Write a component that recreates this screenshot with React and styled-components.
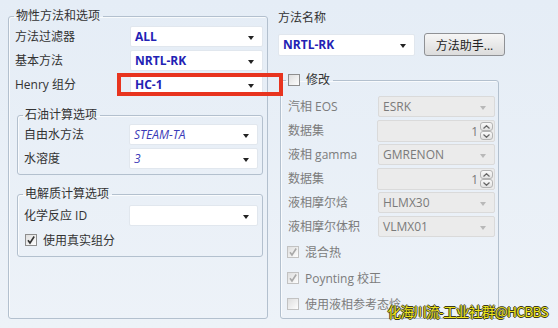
import React from "react";
import styled, { createGlobalStyle, css } from "styled-components";

const GlobalStyle = createGlobalStyle`
  html, body {
    margin: 0;
    padding: 0;
  }
  body {
    font-family: "Open Sans", "Noto Sans CJK SC", sans-serif;
    font-size: 12px;
    color: #333;
  }
`;

const Page = styled.div`
  position: relative;
  width: 558px;
  height: 328px;
  box-sizing: border-box;
  overflow: hidden;
  display: flex;
  gap: 10px;
  padding: 8px 0 9px 8px;
  background: linear-gradient(180deg, #e5edf6 0%, #edf2f8 100%);
`;

const Column = styled.div`
  display: flex;
  flex-direction: column;
  width: ${({ $width }) => $width}px;
`;

const Group = styled.fieldset`
  margin: ${({ $mt }) => $mt || 0}px 0 0 ${({ $ml }) => $ml || 0}px;
  padding: ${({ $pt }) => $pt || 0}px ${({ $pr }) => $pr ?? 5}px
    ${({ $pb }) => $pb || 0}px ${({ $pl }) => $pl ?? 5}px;
  border: 1px solid #b3c0ce;
  border-radius: 3px;
  box-shadow: inset 1px 1px 0 rgba(255, 255, 255, 0.7);
  min-width: 0;
  display: flex;
  flex-direction: column;
  ${({ $grow }) => $grow && css`flex: 1;`}
  ${({ $width }) => $width && css`width: ${$width}px; box-sizing: border-box;`}
`;

const Legend = styled.legend`
  padding: 0 3px 0 2px;
  line-height: 16px;
  font-size: 12px;
  color: #333;
  display: flex;
  align-items: center;
  gap: 6px;
`;

const Rows = styled.div`
  display: flex;
  flex-direction: column;
  gap: 3px;
`;

const Row = styled.div`
  display: grid;
  grid-template-columns: ${({ $label }) => $label}px ${({ $field }) => $field}px;
  align-items: center;
  height: ${({ $h }) => $h || 21}px;
  padding-left: ${({ $pl }) => $pl || 0}px;
`;

const Label = styled.span`
  font-size: 12px;
  line-height: 16px;
  color: ${({ $disabled }) => ($disabled ? "#7c7c7c" : "#333")};
  white-space: nowrap;
`;

const Select = styled.div`
  position: relative;
  box-sizing: border-box;
  height: ${({ $h }) => $h || 21}px;
  display: flex;
  align-items: center;
  padding: 0 20px 0 4px;
  background: ${({ $disabled }) => ($disabled ? "#ebebeb" : "#fff")};
  border: 1px solid ${({ $disabled }) => ($disabled ? "#dadada" : "#e1e7ee")};
  border-radius: 2px;
  font-size: 12px;
  color: ${({ $disabled }) => ($disabled ? "#7a7a7a" : "#2222b4")};
  font-weight: ${({ $bold }) => ($bold ? 700 : 400)};
  font-style: ${({ $italic }) => ($italic ? "italic" : "normal")};
  ${({ $italic }) => $italic && css`color: #3a3ab8;`}
  ${({ $width }) => $width && css`width: ${$width}px;`}

  &::after {
    content: "";
    position: absolute;
    right: 8px;
    top: 50%;
    margin-top: -1px;
    border-left: 3px solid transparent;
    border-right: 3px solid transparent;
    border-top: 4px solid ${({ $disabled }) => ($disabled ? "#b8b8b8" : "#222")};
  }
`;

const Highlight = styled.div`
  position: absolute;
  left: -14px;
  right: -21px;
  top: -2px;
  bottom: -2px;
  border: 4px solid #e8341f;
  pointer-events: none;
`;

const Spinner = styled.div`
  box-sizing: border-box;
  height: 22px;
  display: flex;
  align-items: center;
  justify-content: flex-end;
  gap: 2px;
  padding-right: 1px;
  background: #ebebeb;
  border: 1px solid #dadada;
  border-radius: 2px;
  color: #7a7a7a;
  font-size: 12px;
`;

const SpinButtons = styled.div`
  display: flex;
  flex-direction: column;
`;

const SpinButton = styled.div`
  width: 13px;
  height: 9px;
  box-sizing: border-box;
  border: 1px solid #b4b4b4;
  border-radius: 3px;
  background: linear-gradient(#fafafa, #e2e2e2);
  display: flex;
  align-items: center;
  justify-content: center;
`;

const CheckRow = styled.div`
  display: flex;
  align-items: center;
  gap: 6px;
  height: 16px;
  margin-top: ${({ $mt }) => $mt || 0}px;
  padding-left: ${({ $pl }) => $pl || 0}px;
  font-size: 12px;
  color: ${({ $disabled }) => ($disabled ? "#7c7c7c" : "#333")};
`;

const Box = styled.span`
  width: 12px;
  height: 12px;
  box-sizing: border-box;
  border: 1px solid ${({ $disabled }) => ($disabled ? "#c2c2c2" : "#8e8e8e")};
  background: linear-gradient(135deg, #dedede, #fdfdfd);
  display: inline-flex;
  align-items: center;
  justify-content: center;
`;

const Title = styled.div`
  margin-top: 2px;
  line-height: 16px;
  font-size: 12px;
  color: #333;
`;

const NameRow = styled.div`
  display: flex;
  align-items: center;
  gap: 9px;
  margin-top: 7px;
`;

const Button = styled.div`
  box-sizing: border-box;
  width: 81px;
  height: 23px;
  display: flex;
  align-items: center;
  justify-content: center;
  border: 1px solid #8f9195;
  border-radius: 3px;
  background: linear-gradient(#f6f6f6, #dcdcdc);
  font-size: 12px;
  color: #222;
`;

const CheckList = styled.div`
  display: flex;
  flex-direction: column;
  gap: 10px;
  margin-top: 7px;
`;

const Watermark = styled.div`
  position: absolute;
  right: 10px;
  bottom: 9px;
  font-family: "Noto Sans CJK SC", sans-serif;
  font-size: 13.5px;
  line-height: 16px;
  color: #efe41a;
  text-shadow: -1px 0 #3a3a20, 1px 0 #3a3a20, 0 1px #3a3a20, 0 -1px #3a3a20;
  letter-spacing: -0.6px;
`;

const Check = ({ checked, disabled }) => (
  <Box $disabled={disabled}>
    {checked && (
      <svg width="10" height="10" viewBox="0 0 10 10">
        <path
          d="M2 5.2 L4 8 L8.2 1.5"
          fill="none"
          stroke={disabled ? "#a9a9a9" : "#333"}
          strokeWidth="1.6"
        />
      </svg>
    )}
  </Box>
);

const Spin = ({ value }) => (
  <Spinner>
    {value}
    <SpinButtons>
      <SpinButton>
        <svg width="7" height="4" viewBox="0 0 7 4">
          <path d="M0.5 3.5 L3.5 0.7 L6.5 3.5" fill="none" stroke="#666" strokeWidth="1.2" />
        </svg>
      </SpinButton>
      <SpinButton>
        <svg width="7" height="4" viewBox="0 0 7 4">
          <path d="M0.5 0.5 L3.5 3.3 L6.5 0.5" fill="none" stroke="#666" strokeWidth="1.2" />
        </svg>
      </SpinButton>
    </SpinButtons>
  </Spinner>
);

const App = () => {
  return (
    <Page>
      <GlobalStyle />
      <Column $width={260}>
        <Group $grow $pt={2} $pl={5} $pr={4}>
          <Legend>物性方法和选项</Legend>
          <Rows>
            <Row $label={115} $field={133} $pl={1}>
              <Label>方法过滤器</Label>
              <Select $bold>ALL</Select>
            </Row>
            <Row $label={115} $field={133} $pl={1}>
              <Label>基本方法</Label>
              <Select $bold>NRTL-RK</Select>
            </Row>
            <Row $label={115} $field={133} $pl={1}>
              <Label>Henry 组分</Label>
              <Select $bold>
                HC-1
                <Highlight />
              </Select>
            </Row>
          </Rows>

          <Group $mt={12} $ml={3} $width={246} $pt={1} $pb={5}>
            <Legend>石油计算选项</Legend>
            <Rows>
              <Row $label={105} $field={129} $pl={1}>
                <Label>自由水方法</Label>
                <Select $italic>STEAM-TA</Select>
              </Row>
              <Row $label={105} $field={129} $pl={1}>
                <Label>水溶度</Label>
                <Select $italic>3</Select>
              </Row>
            </Rows>
          </Group>

          <Group $mt={11} $ml={3} $width={246} $pt={3} $pb={8}>
            <Legend>电解质计算选项</Legend>
            <Row $label={105} $field={129} $pl={1}>
              <Label>化学反应 ID</Label>
              <Select />
            </Row>
            <CheckRow $mt={6} $pl={2}>
              <Check checked />
              使用真实组分
            </CheckRow>
          </Group>
        </Group>
      </Column>

      <Column $width={228}>
        <Title>方法名称</Title>
        <NameRow>
          <Select $bold $width={137} $h={22}>
            NRTL-RK
          </Select>
          <Button>方法助手...</Button>
        </NameRow>

        <Group $grow $mt={16} $ml={2} $width={219} $pt={8} $pl={5} $pr={5}>
          <Legend>
            <Check />
            修改
          </Legend>
          <Rows>
            <Row $label={90} $field={117} $pl={2}>
              <Label $disabled>汽相 EOS</Label>
              <Select $disabled>ESRK</Select>
            </Row>
            <Row $label={89} $field={118} $pl={2}>
              <Label $disabled>数据集</Label>
              <Spin value="1" />
            </Row>
            <Row $label={90} $field={117} $pl={2}>
              <Label $disabled>液相 gamma</Label>
              <Select $disabled>GMRENON</Select>
            </Row>
            <Row $label={89} $field={118} $pl={2}>
              <Label $disabled>数据集</Label>
              <Spin value="1" />
            </Row>
            <Row $label={90} $field={117} $pl={2}>
              <Label $disabled>液相摩尔焓</Label>
              <Select $disabled>HLMX30</Select>
            </Row>
            <Row $label={90} $field={117} $pl={2}>
              <Label $disabled>液相摩尔体积</Label>
              <Select $disabled>VLMX01</Select>
            </Row>
          </Rows>
          <CheckList>
            <CheckRow $disabled $pl={1}>
              <Check checked disabled />
              混合热
            </CheckRow>
            <CheckRow $disabled $pl={1}>
              <Check checked disabled />
              Poynting 校正
            </CheckRow>
            <CheckRow $disabled $pl={1}>
              <Check disabled />
              使用液相参考态焓
            </CheckRow>
          </CheckList>
        </Group>
      </Column>

      <Watermark>化海川流-工业社群@HCBBS</Watermark>
    </Page>
  );
};

export default App;
